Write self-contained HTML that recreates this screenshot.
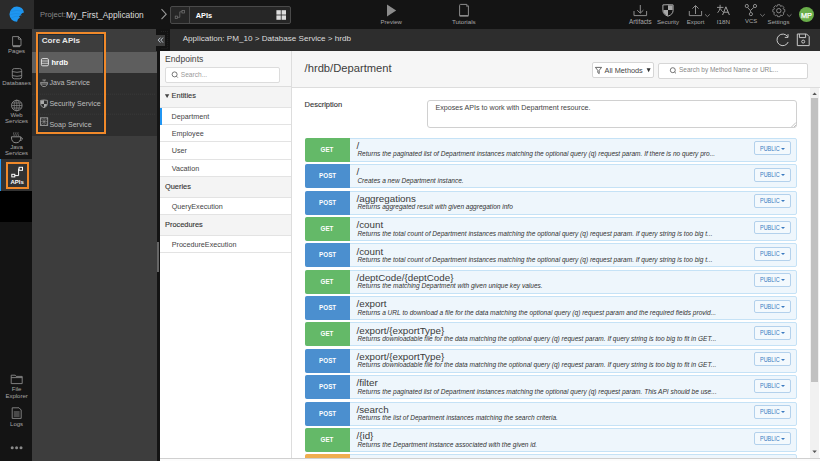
<!DOCTYPE html>
<html><head><meta charset="utf-8">
<style>
*{box-sizing:border-box;margin:0;padding:0}
html,body{width:820px;height:461px;overflow:hidden;background:#141414;font-family:"Liberation Sans",sans-serif}
.a{position:absolute}
.t{position:absolute;white-space:nowrap;line-height:1}
svg{position:absolute;overflow:visible}

.row{position:absolute;left:304.9px;width:492px;height:24px;background:#eef6fc;border:1px solid #c5e2f6;border-radius:2px}
.m{position:absolute;left:-1px;top:-1px;width:45px;height:24px;border-radius:2px 0 0 2px;color:#fff;font-weight:bold;font-size:7.8px;text-align:center;line-height:24.6px}
.m span{display:inline-block;transform:scaleX(0.8)}
.m.g{background:#64b968}.m.p{background:#4b8fcf}.m.o{background:#f0ad4e}
.pth{position:absolute;left:50.6px;top:2.2px;font-size:9.8px;color:#3a3a3a;white-space:nowrap;line-height:1}
.ds{position:absolute;left:51.5px;top:12.6px;font-size:6.56px;font-style:italic;color:#333;white-space:nowrap;line-height:1}
.pub{position:absolute;left:448.4px;top:2.6px;width:36.4px;height:13.7px;border:1px solid #b3d1ec;border-radius:2px;background:#f3f9fd;color:#3a7ac0}
.pub b{position:absolute;left:4.5px;top:3.1px;font-weight:normal;font-size:6.7px;line-height:1;transform:scaleX(0.82);transform-origin:0 0}
.pub i{position:absolute;left:26.2px;top:5.1px;border-left:2.2px solid transparent;border-right:2.2px solid transparent;border-top:2.2px solid #3a7ac0}
.ep{position:absolute;left:160.4px;width:130.6px;border-bottom:1px solid #e3e3e3;background:#fff}
.ep .t{color:#444}
.sec{position:absolute;left:160.4px;width:130.6px;background:#f4f4f4;border-bottom:1px solid #e3e3e3}
.li{position:absolute;left:32px;width:124.5px;height:20.9px;background:#2e2e2e}

.sl{left:0;width:33.2px;text-align:center;font-size:6px;color:#a6a6a6}
</style></head><body>
<!-- TOP BAR -->
<div class="a" style="left:0;top:0;width:820px;height:29px;background:#141414"></div>
<div class="a" style="left:0;top:0;width:34px;height:29px;background:#2b2b2b"></div>

<div class="t" style="left:40px;top:11px;font-size:7.6px;color:#8a8a8a">Project:</div>
<div class="t" style="left:66px;top:10.5px;font-size:8.4px;color:#dcdcdc">My_First_Application</div>


<div class="a" style="left:170px;top:6px;width:120.5px;height:18px;background:#262626;border:1px solid #4a4a4a;border-radius:2px"></div>
<div class="a" style="left:189px;top:6.5px;width:1px;height:17px;background:#4a4a4a"></div>
<div class="t" style="left:195.7px;top:11.5px;font-size:7.4px;font-weight:bold;color:#fff">APIs</div>

<div class="t" style="left:380.6px;top:18.82px;font-size:6.0px;color:#a8a8a8">Preview</div>
<div class="t" style="left:452px;top:18.62px;font-size:6.24px;color:#a8a8a8">Tutorials</div>
<div class="t" style="left:629px;top:18.57px;font-size:6.3px;color:#a8a8a8">Artifacts</div>
<div class="t" style="left:657px;top:18.73px;font-size:6.1px;color:#a8a8a8">Security</div>
<div class="t" style="left:686.8px;top:18.73px;font-size:6.1px;color:#a8a8a8">Export</div>
<div class="t" style="left:716.7px;top:18.61px;font-size:6.25px;color:#a8a8a8">I18N</div>
<div class="t" style="left:745px;top:18.90px;font-size:5.9px;color:#a8a8a8">VCS</div>
<div class="t" style="left:767.6px;top:18.77px;font-size:6.06px;color:#a8a8a8">Settings</div>
<div class="a" style="left:798.7px;top:6.7px;width:15.8px;height:15.8px;border-radius:50%;background:#6aae4a"></div>
<div class="t" style="left:801px;top:11.5px;font-size:7.3px;color:#fff;-webkit-text-stroke:0.25px #fff">MP</div>


<!-- TOP ICONS -->
<svg style="left:0;top:0" width="820" height="29" viewBox="0 0 820 29" fill="none" stroke="#8c8c8c" stroke-width="1">
  <path d="M161.5 9.2 L166.2 14.2 L161.5 19.2" stroke="#9a9a9a" stroke-width="1.1"/>
  <!-- dropdown api icon -->
  <rect x="175.2" y="16.1" width="2.4" height="2.4" stroke-width="0.7" stroke="#777"/>
  <rect x="182" y="10.6" width="2.4" height="2.4" stroke-width="0.7" stroke="#777"/>
  <path d="M177.6 17.3 H179.8 V11.8 H182" stroke-width="0.7" stroke="#777"/>
  <!-- grid -->
  <rect x="276.4" y="10.2" width="4.4" height="4.4" fill="#ddd" stroke="none"/>
  <rect x="281.6" y="10.2" width="4.4" height="4.4" fill="#ddd" stroke="none"/>
  <rect x="276.4" y="15.4" width="4.4" height="4.4" fill="#ddd" stroke="none"/>
  <rect x="281.6" y="15.4" width="4.4" height="4.4" fill="#ddd" stroke="none"/>
  <!-- play -->
  <path d="M387 4.4 L396.2 10.4 L387 16.4 Z" fill="#8c8c8c" stroke="none"/>
  <!-- tutorials book -->
  <path d="M459.6 15.6 V5.4 Q459.6 4.4 460.6 4.4 H466.8 L468.4 6 V15.6 Z"/>
  <path d="M459.6 15.9 H468.4" stroke-width="1.5"/>
  <path d="M466.6 4.6 V6.4 L468.2 6.2" stroke-width="0.7"/>
  <!-- artifacts -->
  <path d="M634 11 V15.6 H646.6 V11"/>
  <path d="M640.3 5 V13 M637.2 10.2 L640.3 13.2 L643.4 10.2"/>
  <!-- security shield -->
  <path d="M662.9 4.9 Q668 4.5 673.1 4.9 V10.4 Q673.1 14.4 668 16.2 Q662.9 14.4 662.9 10.4 Z" stroke="#a8a8a8"/>
  <path d="M668 5.2 L672.6 5.6 V9.9 H668 Z M663.4 9.9 H668 V16 Q663.6 14.4 663.4 10.6 Z" fill="#a8a8a8" stroke="none"/>
  <!-- export -->
  <path d="M689.3 11 V15.6 H701.6 V11"/>
  <path d="M695.5 14 V5.6 M692.4 8.6 L695.5 5.5 L698.6 8.6"/>
  <path d="M705 14.3 L707.4 16.6 L709.8 14.3" stroke-width="0.8"/>
  <!-- vcs -->
  <circle cx="746.8" cy="6" r="1.6"/><circle cx="755" cy="6" r="1.6"/><circle cx="750.9" cy="14.1" r="1.6"/>
  <path d="M747.6 7.4 L750.3 10.6 L753.8 7.4 M750.6 10.6 V12.5"/>
  <path d="M760.2 14.1 L762.5 16.3 L764.8 14.1" stroke-width="0.8"/>
  <!-- settings -->
  <path d="M786.9 14.3 L789.2 16.5 L791.5 14.3" stroke-width="0.8"/>
  <circle cx="778.8" cy="10.7" r="2.2"/>
</svg>
<svg style="left:0;top:0" width="820" height="29" viewBox="0 0 820 29" fill="none" stroke="#8c8c8c" stroke-width="0.85"><path d="M783.20 9.04 L784.78 9.49 L784.78 11.91 L783.20 12.36 L783.08 12.64 L783.88 14.07 L782.17 15.78 L780.74 14.98 L780.46 15.10 L780.01 16.68 L777.59 16.68 L777.14 15.10 L776.86 14.98 L775.43 15.78 L773.72 14.07 L774.52 12.64 L774.40 12.36 L772.82 11.91 L772.82 9.49 L774.40 9.04 L774.52 8.76 L773.72 7.33 L775.43 5.62 L776.86 6.42 L777.14 6.30 L777.59 4.72 L780.01 4.72 L780.46 6.30 L780.74 6.42 L782.17 5.62 L783.88 7.33 L783.08 8.76 Z" stroke-linejoin="round"/></svg>
<svg style="left:0;top:0" width="820" height="29" viewBox="0 0 820 29" fill="none" stroke="#a0a0a0" stroke-width="0.9">
  <path d="M717 7.4 H723.4 M720.1 4.8 V7.8 Q719.6 10.8 717.6 12.8 M720.4 8.6 Q721.2 10.6 722.8 11.8"/>
  <path d="M722.6 15 L725.9 6.8 L729.4 15 M723.8 12.2 H728.2" stroke-width="1"/>
</svg>

<!-- LEFT SIDEBAR -->
<div class="a" style="left:0;top:29px;width:32px;height:432px;background:#141414"></div>
<div class="a" style="left:0;top:159.4px;width:32px;height:32px;background:#333"></div>
<div class="a" style="left:0;top:159.4px;width:1.4px;height:32px;background:#2196f3"></div>
<div class="a" style="left:0;top:191.4px;width:32px;height:30.6px;background:#000"></div>
<div class="a" style="left:6px;top:162px;width:23px;height:26.6px;border:2px solid #f0892a"></div>


<!-- LOGO -->
<svg style="left:0;top:0" width="34" height="29" viewBox="0 0 34 29">
  <path d="M16.85 6.6 A7.5 7.6 0 0 0 17.06 21.8 Q17.3 18.8 20.1 17.2 Q19.5 16.9 19.0 16.4 Q20.3 15.3 22.05 15.37 Q21.3 14.9 20.75 14.4 Q22.4 12.7 24.0 12.46 A7.4 7.4 0 0 0 16.85 6.6 Z" fill="#1e96f0"/>
  <path d="M10.8 11.4 Q16.5 9.6 22.6 11.2 M10.2 14.6 Q15.5 12.6 20.9 14.2 M11.4 17.8 Q15 15.8 18.6 16.3" stroke="#1a82d6" stroke-width="0.5" fill="none"/>
</svg>
<!-- SIDEBAR ICONS -->
<svg style="left:0;top:29px" width="32" height="432" viewBox="0 0 32 432" fill="none" stroke="#8a8a8a" stroke-width="0.9">
  <!-- pages -->
  <path d="M12.6 7.6 H18.6 L21 10 V16.6 H12.6 Z M18.4 7.6 V10.2 H21"/>
  <path d="M12.8 17.6 H20.2" stroke-width="1.1"/>
  <!-- databases -->
  <rect x="12.3" y="39.6" width="9.4" height="10.2" rx="2"/>
  <path d="M12.3 42.6 Q17 44 21.7 42.6 M12.3 46.6 Q17 48 21.7 46.6"/>
  <!-- globe -->
  <circle cx="16.8" cy="76.5" r="5.3"/>
  <path d="M12 74 H21.6 M11.6 76.5 H22 M12 79 H21.6 M16.8 71.2 V81.8" stroke-width="0.7"/>
  <ellipse cx="16.8" cy="76.5" rx="2.6" ry="5.3" stroke-width="0.7"/>
  <!-- java cup -->
  <path d="M13.9 103.3 Q13.3 104.4 13.9 105.4 Q14.5 106.3 13.9 107 M16 103.3 Q15.4 104.4 16 105.4 Q16.6 106.3 16 107 M18.1 103.3 Q17.5 104.4 18.1 105.4 Q18.7 106.3 18.1 107" stroke-width="0.7"/>
  <path d="M11.4 107.8 H20.8 Q20.8 113.8 16.1 113.8 Q11.4 113.8 11.4 107.8 Z M20.7 108.6 Q22.8 108.6 22.3 110.3 Q21.6 111.6 19.8 111.4" stroke-width="1"/>
  <!-- file explorer -->
  <path d="M11.2 346.2 H15.2 L16.2 347.4 H22.2 V354.6 H11.2 Z M11.2 348.6 H22.2"/>
  <!-- logs -->
  <path d="M12.2 378.8 H19 L21.2 381 V389.4 H12.2 Z M13.8 383 H19.6 M13.8 385 H19.6 M13.8 387 H19.6"/>
</svg>
<svg style="left:0;top:29px" width="32" height="432" viewBox="0 0 32 432">
  <circle cx="12.2" cy="418.8" r="1.5" fill="#8a8a8a"/><circle cx="16.6" cy="418.8" r="1.5" fill="#8a8a8a"/><circle cx="21" cy="418.8" r="1.5" fill="#8a8a8a"/>
</svg>
<div class="t sl" style="top:48.12px">Pages</div>
<div class="t sl" style="top:79.82px">Databases</div>
<div class="t sl" style="top:111.82px">Web</div>
<div class="t sl" style="top:117.72px">Services</div>
<div class="t sl" style="top:143.62px">Java</div>
<div class="t sl" style="top:149.52px">Services</div>
<div class="t sl" style="top:386.42px">File</div>
<div class="t sl" style="top:392.82px">Explorer</div>
<div class="t sl" style="top:421.02px">Logs</div>
<!-- APIs icon -->
<svg style="left:0;top:0" width="32" height="200" viewBox="0 0 32 200" fill="none" stroke="#fff" stroke-width="1">
  <rect x="19.1" y="167.3" width="3.4" height="3" />
  <rect x="11.8" y="174.3" width="3" height="2.6"/>
  <path d="M14.8 175.6 H18.6 V168.8 H19.1"/>
</svg>
<div class="t" style="left:10.4px;top:179px;font-size:6px;font-weight:bold;color:#fff;width:13px">APIs</div>

<!-- PANEL -->
<div class="a" style="left:32px;top:29px;width:124.5px;height:432px;background:#3d3d3d"></div>

<!-- DARK STRIP + BREADCRUMB -->
<div class="a" style="left:156.3px;top:29px;width:13.5px;height:22px;background:#131313"></div>
<svg style="left:0;top:0" width="180" height="60" viewBox="0 0 180 60" fill="none" stroke="#3a3a3a" stroke-width="0.6" stroke-dasharray="0.7 1.3"><path d="M161 31.5 H167.6 V48.6 H161"/></svg>
<div class="a" style="left:156.5px;top:51px;width:4px;height:410px;background:#141414"></div>
<div class="a" style="left:156.8px;top:241.7px;width:1.9px;height:30.3px;background:#666"></div>
<div class="a" style="left:156px;top:35px;width:9px;height:10.7px;background:#3d3d3d"></div>
<svg style="left:0;top:0" width="170" height="50" viewBox="0 0 170 50" fill="none" stroke="#c9d2dc" stroke-width="0.9"><path d="M160.4 37.6 L158.2 40.1 L160.4 42.6 M163 37.6 L160.8 40.1 L163 42.6"/></svg>
<div class="a" style="left:170px;top:29px;width:650px;height:22px;background:#2d2d2d"></div>
<div class="t" style="left:182.7px;top:35px;font-size:8.1px;color:#ddd">Application: PM_10 &gt; Database Service &gt; hrdb</div>


<svg style="left:0;top:0" width="820" height="52" viewBox="0 0 820 52" fill="none" stroke="#c8c8c8" stroke-width="1">
  <path d="M787.6 36.6 A5.8 5.8 0 1 0 788.2 42"/>
  <path d="M788 34.2 V37.4 H784.8"/>
  <path d="M797.3 34 H806.6 L809.2 36.6 V45.6 H797.3 Z"/>
  <path d="M799.4 34 V37.6 H805.6 V34"/>
  <circle cx="803.2" cy="41.6" r="1.5"/>
</svg>

<!-- WHITE CONTENT -->
<div class="a" style="left:160.4px;top:51px;width:660px;height:410px;background:#fff"></div>


<!-- PANEL LIST -->

<div class="t" style="left:41.7px;top:37.4px;font-size:8.1px;font-weight:bold;color:#e8e8e8">Core APIs</div>
<div class="li" style="top:51.8px;height:21.2px;background:#5e5e5e"></div>
<div class="li" style="top:73px"></div>
<div class="li" style="top:93.9px"></div>
<div class="li" style="top:114.8px;height:21px"></div>
<svg style="left:0;top:0" width="160" height="140" viewBox="0 0 160 140" fill="none" stroke="#444" stroke-width="0.6" stroke-dasharray="0.8 1.2"><path d="M32 94.2 H156 M32 114.2 H156"/></svg>
<div class="t" style="left:51.5px;top:58.8px;font-size:7.4px;font-weight:bold;color:#fff">hrdb</div>
<div class="t" style="left:49.4px;top:80.1px;font-size:7.1px;color:#bdbdbd">Java Service</div>
<div class="t" style="left:49.4px;top:101.3px;font-size:7.1px;color:#bdbdbd">Security Service</div>
<div class="t" style="left:49.4px;top:122.4px;font-size:7.1px;color:#bdbdbd">Soap Service</div>

<svg style="left:0;top:0" width="160" height="140" viewBox="0 0 160 140" fill="none" stroke="#aaa" stroke-width="0.8">
  <rect x="41.4" y="58.6" width="7" height="7.2" rx="1.2" stroke="#eee" stroke-width="0.9"/>
  <path d="M41.6 61 H48.2 M41.6 63.3 H48.2" stroke="#eee" stroke-width="0.7"/>
  <path d="M42.4 80 H46 M44.2 80 V81.6" stroke-width="0.7"/>
  <path d="M40.6 82.4 H47.6 Q47.3 86.6 44.1 86.6 Q40.9 86.6 40.6 82.4 Z M40.8 84 H47.4"/>
  <path d="M40.6 100.4 Q44 99.6 47.4 100.4 V103.8 Q47.4 106.6 44 107.8 Q40.6 106.6 40.6 103.8 Z"/>
  <path d="M41 100.8 L44 100.3 V104 H41 Z M44 104 H47 Q46.8 106.2 44 107.4 Z" fill="#aaa" stroke="none"/>
  <rect x="40.5" y="117.8" width="7.2" height="7.6" stroke-width="0.8"/>
  <path d="M40.9 118.2 L47.3 125 M47.3 118.2 L40.9 125 M44.1 117.8 V125.4 M40.5 121.6 H47.7" stroke-width="0.45"/>
</svg>
<div class="a" style="left:36px;top:32px;width:69.5px;height:102.4px;border:2px solid #f0892a;box-shadow:inset 0 0 0 1px #1f2a35"></div>

<!-- ENDPOINT LIST -->
<div class="a" style="left:160.4px;top:51px;width:130.6px;height:36px;background:#f7f7f7;border-bottom:1px solid #ddd"></div>
<div class="t" style="left:165.1px;top:55px;font-size:8.6px;color:#444">Endpoints</div>
<div class="a" style="left:165.1px;top:66.5px;width:115.2px;height:16.5px;background:#fff;border:1px solid #dcdcdc;border-radius:2px"></div>
<div class="t" style="left:180.8px;top:72px;font-size:6.6px;color:#999">Search...</div>
<div class="sec" style="top:87px;height:20.5px"></div>
<div class="t" style="left:171.6px;top:92.3px;font-size:7.4px;color:#333;-webkit-text-stroke:0.12px #333">Entities</div>
<div class="ep" style="top:107.5px;height:17.5px"></div>
<div class="a" style="left:160.4px;top:107.5px;width:2px;height:17.5px;background:#2196f3"></div>
<div class="t" style="left:171.6px;top:112.5px;font-size:7.2px;color:#444">Department</div>
<div class="ep" style="top:125px;height:17px"></div>
<div class="t" style="left:171.7px;top:129.7px;font-size:7.2px;color:#444">Employee</div>
<div class="ep" style="top:142px;height:17.5px"></div>
<div class="t" style="left:171.7px;top:147px;font-size:7.2px;color:#444">User</div>
<div class="ep" style="top:159.5px;height:17.5px"></div>
<div class="t" style="left:171.7px;top:164.5px;font-size:7.2px;color:#444">Vacation</div>
<div class="sec" style="top:177px;height:20.5px"></div>
<div class="t" style="left:165px;top:182.5px;font-size:7.4px;color:#333;-webkit-text-stroke:0.12px #333">Queries</div>
<div class="ep" style="top:197.5px;height:17.5px"></div>
<div class="t" style="left:171.7px;top:202.5px;font-size:7.2px;color:#444">QueryExecution</div>
<div class="sec" style="top:215px;height:20.5px"></div>
<div class="t" style="left:165px;top:220.5px;font-size:7.4px;color:#333;-webkit-text-stroke:0.12px #333">Procedures</div>
<div class="ep" style="top:235.5px;height:17.5px"></div>
<div class="t" style="left:171.7px;top:240.5px;font-size:7.2px;color:#444">ProcedureExecution</div>
<div class="a" style="left:291px;top:51px;width:1px;height:410px;background:#ddd"></div>

<!-- CONTENT HEADER -->
<div class="a" style="left:292px;top:51px;width:528px;height:36.5px;background:#f6f6f6;border-bottom:1px solid #ddd"></div>
<div class="t" style="left:304.6px;top:63.1px;font-size:11.2px;color:#3d3d3d">/hrdb/Department</div>
<div class="a" style="left:592.3px;top:62px;width:62px;height:16.4px;background:#fff;border:1px solid #d6d6d6;border-radius:2px"></div>
<div class="t" style="left:604.5px;top:66.8px;font-size:7.33px;color:#444">All Methods</div>
<svg style="left:0;top:0" width="820" height="80" viewBox="0 0 820 80"><path d="M646.6 68.2 H650.6 L648.6 72.2 Z" fill="#333"/></svg>
<div class="a" style="left:657.5px;top:62.5px;width:150px;height:16.1px;background:#fff;border:1px solid #d6d6d6;border-radius:2px"></div>
<div class="t" style="left:679px;top:67.3px;font-size:6.47px;color:#888">Search by Method Name or URL...</div>

<div class="t" style="left:304.6px;top:100.9px;font-size:7.5px;color:#333;-webkit-text-stroke:0.12px #333">Description</div>
<div class="a" style="left:427.4px;top:99.6px;width:369.6px;height:28.8px;background:#fff;border:1px solid #d0d0d0;border-radius:3px"></div>
<div class="t" style="left:435.4px;top:105.4px;font-size:7.17px;color:#444">Exposes APIs to work with Department resource.</div>


<svg style="left:0;top:0" width="820" height="120" viewBox="0 0 820 120" fill="none" stroke="#555" stroke-width="0.8">
  <path d="M164.9 94.3 H169.3 L167.1 98.1 Z" fill="#444" stroke="none"/>
  <circle cx="174.6" cy="74.4" r="2.5"/><path d="M176.4 76.2 L177.8 77.6"/>
  <circle cx="672.8" cy="70.2" r="2.5"/><path d="M674.6 72 L676 73.4"/>
  <path d="M595.4 67.4 H601.6 L599.2 70.4 V73.6 L597.8 72.6 V70.4 Z" stroke="#444"/>
  <path d="M796 125 L794 127 M796 122.5 L791.5 127" stroke="#999" stroke-width="0.6"/>
</svg>
<!-- ROWS -->
<div class="a" style="left:292px;top:87.5px;width:518px;height:370.5px;overflow:hidden">
<div class="a" style="left:-292px;top:-87.5px;width:820px;height:461px">
<div class="row" style="top:137.90px"><div class="m g"><span>GET</span></div><div class="pth">/</div><div class="ds">Returns the paginated list of Department instances matching the optional query (q) request param. If there is no query pro...</div><div class="pub"><b>PUBLIC</b><i></i></div></div>
<div class="row" style="top:164.27px"><div class="m p"><span>POST</span></div><div class="pth">/</div><div class="ds">Creates a new Department instance.</div><div class="pub"><b>PUBLIC</b><i></i></div></div>
<div class="row" style="top:190.64px"><div class="m p"><span>POST</span></div><div class="pth">/aggregations</div><div class="ds">Returns aggregated result with given aggregation info</div><div class="pub"><b>PUBLIC</b><i></i></div></div>
<div class="row" style="top:217.01px"><div class="m g"><span>GET</span></div><div class="pth">/count</div><div class="ds">Returns the total count of Department instances matching the optional query (q) request param. If query string is too big t...</div><div class="pub"><b>PUBLIC</b><i></i></div></div>
<div class="row" style="top:243.38px"><div class="m p"><span>POST</span></div><div class="pth">/count</div><div class="ds">Returns the total count of Department instances matching the optional query (q) request param. If query string is too big t...</div><div class="pub"><b>PUBLIC</b><i></i></div></div>
<div class="row" style="top:269.75px"><div class="m g"><span>GET</span></div><div class="pth">/deptCode/{deptCode}</div><div class="ds">Returns the matching Department with given unique key values.</div><div class="pub"><b>PUBLIC</b><i></i></div></div>
<div class="row" style="top:296.12px"><div class="m p"><span>POST</span></div><div class="pth">/export</div><div class="ds">Returns a URL to download a file for the data matching the optional query (q) request param and the required fields provid...</div><div class="pub"><b>PUBLIC</b><i></i></div></div>
<div class="row" style="top:322.49px"><div class="m g"><span>GET</span></div><div class="pth">/export/{exportType}</div><div class="ds">Returns downloadable file for the data matching the optional query (q) request param. If query string is too big to fit in GET...</div><div class="pub"><b>PUBLIC</b><i></i></div></div>
<div class="row" style="top:348.86px"><div class="m p"><span>POST</span></div><div class="pth">/export/{exportType}</div><div class="ds">Returns downloadable file for the data matching the optional query (q) request param. If query string is too big to fit in GET...</div><div class="pub"><b>PUBLIC</b><i></i></div></div>
<div class="row" style="top:375.23px"><div class="m p"><span>POST</span></div><div class="pth">/filter</div><div class="ds">Returns the paginated list of Department instances matching the optional query (q) request param. This API should be use...</div><div class="pub"><b>PUBLIC</b><i></i></div></div>
<div class="row" style="top:401.60px"><div class="m p"><span>POST</span></div><div class="pth">/search</div><div class="ds">Returns the list of Department instances matching the search criteria.</div><div class="pub"><b>PUBLIC</b><i></i></div></div>
<div class="row" style="top:427.97px"><div class="m g"><span>GET</span></div><div class="pth">/{id}</div><div class="ds">Returns the Department instance associated with the given id.</div><div class="pub"><b>PUBLIC</b><i></i></div></div>
<div class="row" style="top:454.34px"><div class="m o"><span>PUT</span></div><div class="pth">/{id}</div><div class="ds"></div><div class="pub"><b>PUBLIC</b><i></i></div></div>
</div></div>

<!-- SCROLLBAR -->
<div class="a" style="left:810.3px;top:87.5px;width:8.7px;height:370px;background:#f1f1f1"></div>
<div class="a" style="left:811px;top:98.3px;width:7.3px;height:283.7px;background:#c1c1c1"></div>
<svg style="left:0;top:0" width="820" height="461" viewBox="0 0 820 461">
  <path d="M812.4 95 L814.6 92.6 L816.8 95 Z" fill="#555"/>
  <path d="M812.4 450.6 L814.6 453 L816.8 450.6 Z" fill="#555"/>
</svg>
<div class="a" style="left:160.4px;top:457.8px;width:660px;height:3.2px;background:#fcfcfc;border-top:1px solid #d0d0d0"></div>
</body></html>
